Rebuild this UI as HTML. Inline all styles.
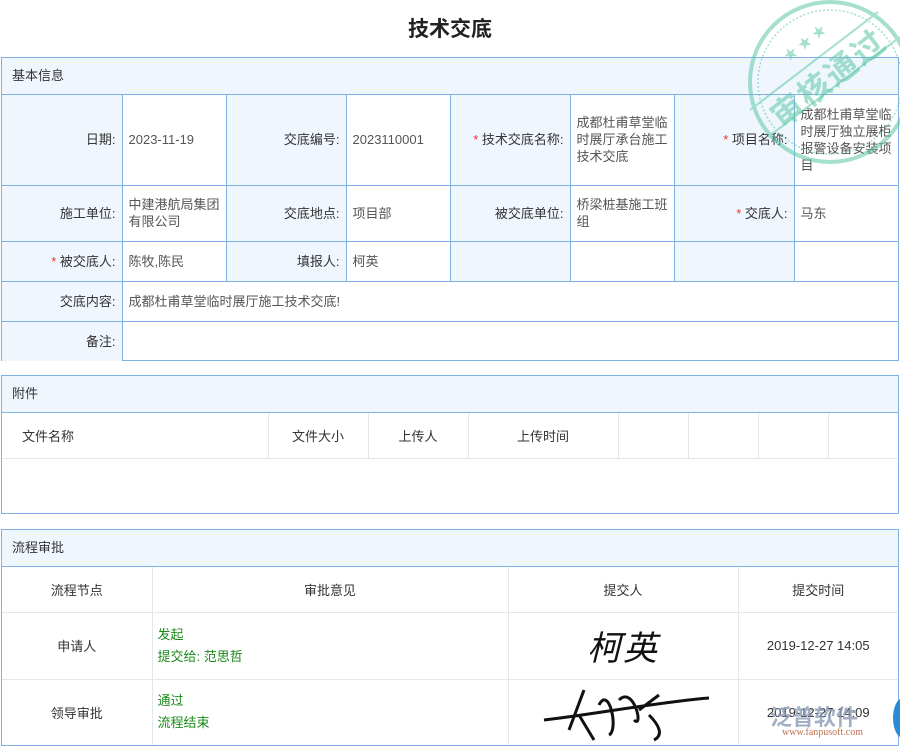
<!DOCTYPE html>
<html><head><meta charset="utf-8"><style>
*{box-sizing:border-box;margin:0;padding:0}
body{width:900px;height:749px;background:#fff;font-family:"Liberation Sans","Noto Sans CJK SC",sans-serif;font-size:13px;color:#333;position:relative;overflow:hidden}
.title{position:absolute;top:13px;left:0;width:900px;text-align:center;font-size:21px;font-weight:bold;color:#222}
.box{position:absolute;left:1px;width:898px;border:1px solid #7fb1e3}
.hd{height:37px;line-height:36px;background:#f0f6fe;padding-left:10px;border-bottom:1px solid #7fb1e3}
table{border-collapse:collapse;width:100%;table-layout:fixed}
td{vertical-align:middle}
.bi td{border:1px solid #7fb1e3;padding:0 6px;line-height:17px;color:#555}
.bi td.l{background:#f0f6fe;text-align:right;color:#333}
.bi tr:first-child td{border-top:none}
.bi td:first-child{border-left:none}.bi td:last-child{border-right:none}
.bi tr:last-child td{border-bottom:none}
.r{color:#e33}
.at td{border:1px solid #e3e6ea;text-align:center;height:45px}
.at tr:first-child td{border-top:none}
.at td:first-child{border-left:none}.at td:last-child{border-right:none}
.fl td{border:1px solid #e3e6ea;text-align:center}
.fl tr td:first-child{border-left:none}.fl tr td:last-child{border-right:none}
.fl tr:first-child td{border-top:none}.fl tr:last-child td{border-bottom:none}
.g{color:#1a8a1a;text-align:left!important;padding-left:5px;line-height:22px}
</style></head><body>
<div class="title">技术交底</div>

<div class="box" style="top:57px;height:304px">
<div class="hd">基本信息</div>
<table class="bi">
<colgroup><col style="width:120px"><col style="width:104px"><col style="width:120px"><col style="width:104px"><col style="width:120px"><col style="width:104px"><col style="width:120px"><col></colgroup>
<tr style="height:90px"><td class="l">日期:</td><td>2023-11-19</td><td class="l">交底编号:</td><td>2023110001</td><td class="l"><span class="r">*</span> 技术交底名称:</td><td>成都杜甫草堂临时展厅承台施工技术交底</td><td class="l"><span class="r">*</span> 项目名称:</td><td>成都杜甫草堂临时展厅独立展柜报警设备安装项目</td></tr>
<tr style="height:56px"><td class="l">施工单位:</td><td>中建港航局集团有限公司</td><td class="l">交底地点:</td><td>项目部</td><td class="l">被交底单位:</td><td>桥梁桩基施工班组</td><td class="l"><span class="r">*</span> 交底人:</td><td>马东</td></tr>
<tr style="height:40px"><td class="l"><span class="r">*</span> 被交底人:</td><td>陈牧,陈民</td><td class="l">填报人:</td><td>柯英</td><td class="l"></td><td></td><td class="l"></td><td></td></tr>
<tr style="height:40px"><td class="l">交底内容:</td><td colspan="7">成都杜甫草堂临时展厅施工技术交底!</td></tr>
<tr style="height:40px"><td class="l">备注:</td><td colspan="7"></td></tr>
</table>
</div>

<div class="box" style="top:375px;height:139px">
<div class="hd">附件</div>
<table class="at">
<colgroup><col style="width:266px"><col style="width:100px"><col style="width:100px"><col style="width:150px"><col style="width:70px"><col style="width:70px"><col style="width:70px"><col></colgroup>
<tr><td style="text-align:left;padding-left:20px">文件名称</td><td>文件大小</td><td>上传人</td><td>上传时间</td><td></td><td></td><td></td><td></td></tr>
</table>
</div>

<div class="box" style="top:529px;height:217px">
<div class="hd">流程审批</div>
<table class="fl">
<colgroup><col style="width:150px"><col style="width:356px"><col style="width:230px"><col></colgroup>
<tr style="height:45px"><td>流程节点</td><td>审批意见</td><td>提交人</td><td>提交时间</td></tr>
<tr style="height:67px"><td>申请人</td><td class="g">发起<br>提交给: 范思哲</td><td><span style="font-family:'Liberation Serif',serif;font-size:34px;font-style:italic;color:#111;letter-spacing:2px">柯英</span></td><td>2019-12-27 14:05</td></tr>
<tr style="height:66px"><td>领导审批</td><td class="g">通过<br>流程结束</td><td style="position:relative"><svg width="230" height="66" style="position:absolute;left:0;top:0"><path d="M35 40 C80 35 150 22 200 18 M60 50 L75 10 M70 35 L85 60 M90 25 C100 5 110 50 100 55 M110 20 C125 5 135 50 125 40 M130 30 L150 15 M140 35 C150 45 155 55 145 60" stroke="#111" stroke-width="3" fill="none"/></svg></td><td>2019-12-27 14:09</td></tr>
</table>
</div>

<div style="position:absolute;left:770px;top:700px;font-size:22px;color:#8a9bb5;font-weight:bold;opacity:.8">泛普软件</div>
<div style="position:absolute;left:782px;top:727px;font-size:10px;color:#c07050;font-family:'Liberation Serif',serif">www.fanpusoft.com</div>
<div style="position:absolute;left:893px;top:698px;width:20px;height:40px;border-radius:50%;background:#2a8ad8"></div>

<svg width="900" height="200" style="position:absolute;left:0;top:0;pointer-events:none">
<g opacity=".55" fill="none" stroke="#5cc7a6">
<circle cx="830" cy="82" r="80" stroke-width="4"/>
<circle cx="830" cy="82" r="72" stroke-width="1.5" stroke-dasharray="2 2"/>
<line x1="750" y1="110" x2="878" y2="12" stroke-width="2"/>
<line x1="768" y1="137" x2="900" y2="37" stroke-width="2"/>
</g>
<text x="828" y="90" text-anchor="middle" transform="rotate(-38 828 78)" font-size="32" font-weight="bold" fill="#5cc7a6" opacity=".55" font-family="Noto Sans CJK SC,sans-serif" letter-spacing="2">审核通过</text>
<text x="788" y="62" font-size="14" fill="#5cc7a6" opacity=".55" transform="rotate(-38 788 62)">★ ★ ★</text>
</svg>
</body></html>
